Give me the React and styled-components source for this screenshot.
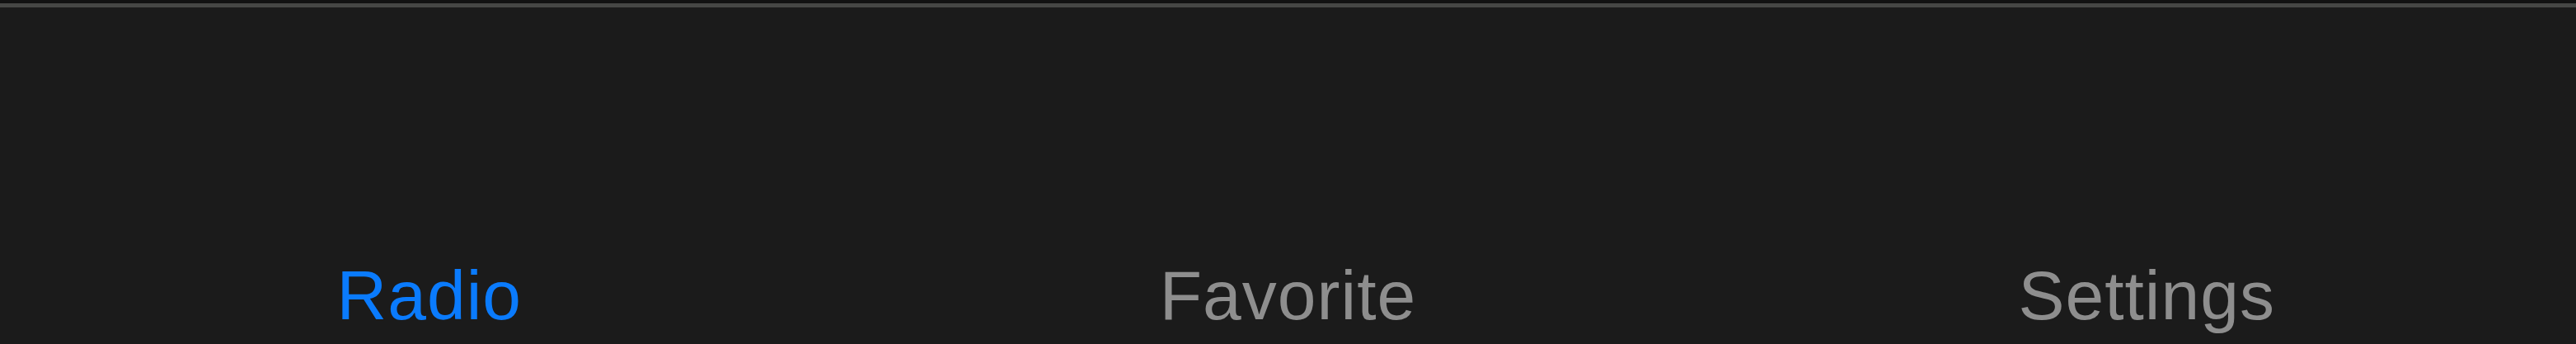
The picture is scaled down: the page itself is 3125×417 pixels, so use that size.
import React from 'react';
import styled, { createGlobalStyle } from 'styled-components';

const Global = createGlobalStyle`
  html, body {
    margin: 0;
    padding: 0;
    background: #1b1b1b;
  }
`

const Screen = styled.div`
  width: 3125px;
  height: 417px;
  display: flex;
  flex-direction: column;
  background: #121212;
  padding-top: 4px;
  box-sizing: border-box;
`

const TabBar = styled.nav`
  flex: 1;
  display: grid;
  grid-template-columns: repeat(3, 1fr);
  align-items: end;
  background: #1b1b1b;
  border-top: 5px solid #464745;
  padding-bottom: 17px;
`

const Tab = styled.div`
  text-align: center;
  font-family: "Liberation Sans", Arial, sans-serif;
  font-size: 84px;
  line-height: 84px;
  letter-spacing: 1px;
  color: ${(p) => (p.active ? '#0a7bfd' : '#8e8e8e')};
`

const tabs = ['Radio', 'Favorite', 'Settings']

export default function App() {
  return (
    <>
      <Global />
      <Screen>
        <TabBar>
          {tabs.map((t, i) => (
            <Tab key={t} active={i === 0 ? 1 : 0}>{t}</Tab>
          ))}
        </TabBar>
      </Screen>
    </>
  )
}
